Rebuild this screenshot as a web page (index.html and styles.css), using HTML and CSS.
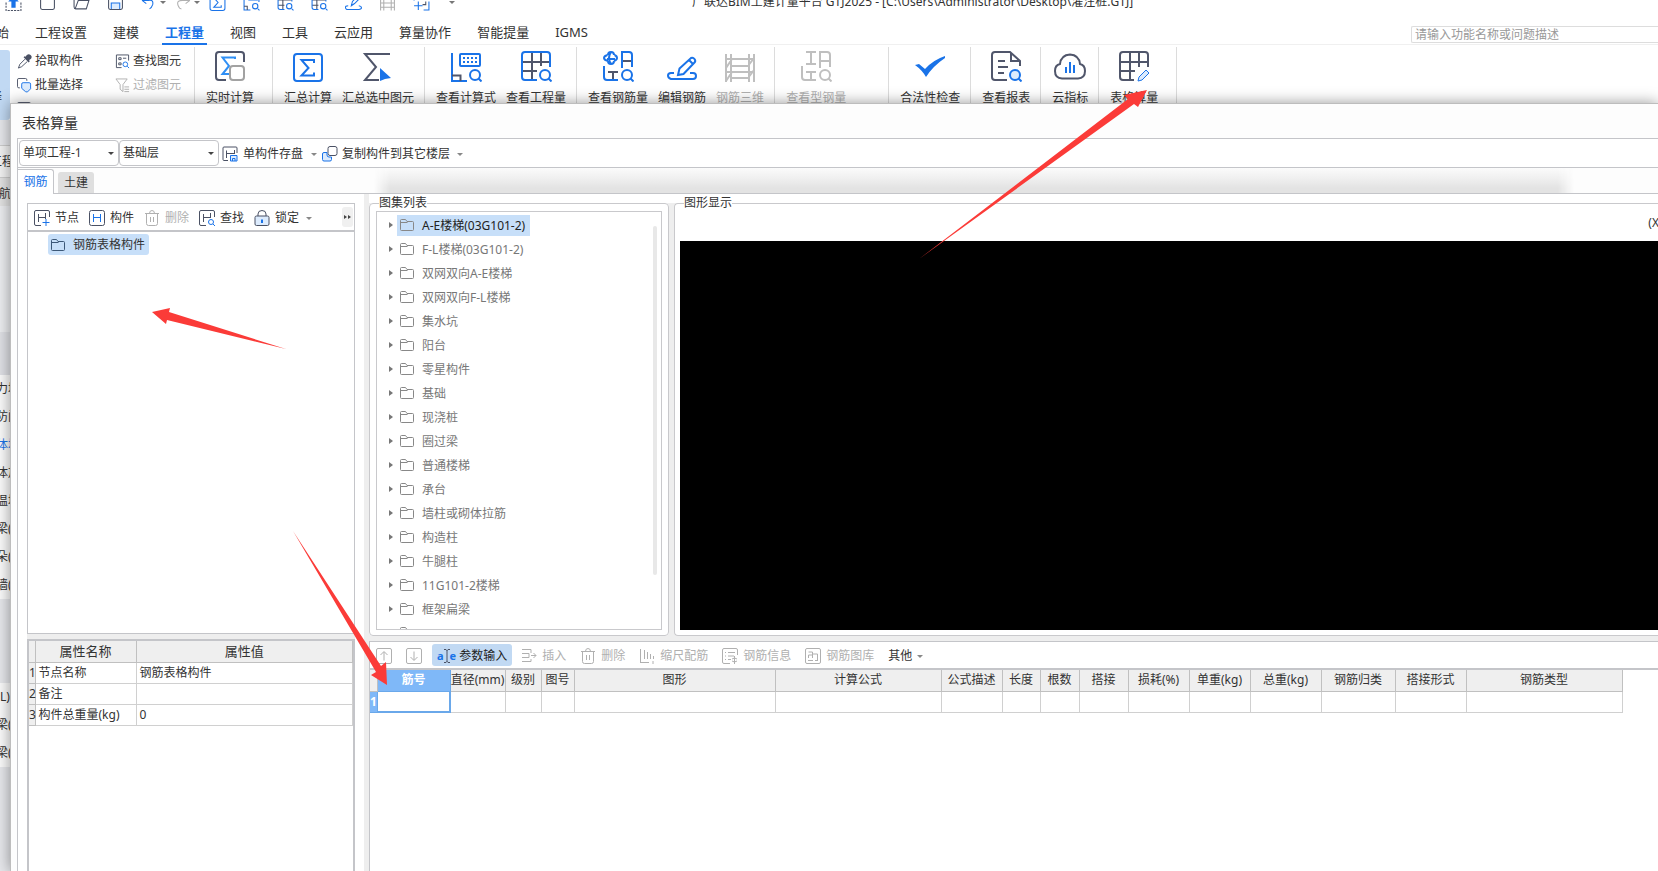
FILE: index.html
```html
<!DOCTYPE html>
<html lang="zh-CN">
<head>
<meta charset="utf-8">
<title>广联达BIM土建计量平台 GTJ2025</title>
<link rel="stylesheet" href="styles.css">
</head>
<body>
<svg class="defs" aria-hidden="true">
  <symbol id="folder" viewBox="0 0 14 12"><path d="M.5 10.5v-9q0-1 1-1h4l1.500 2h5.500q1 0 1 1v7q0 1-1 1h-11q-1 0-1-1zM.5 3.500h7"/></symbol>
  <symbol id="trash" viewBox="0 0 14 16"><path d="M0 3.500h14M4.500 3.500q0-3 2.500-3t2.500 3M1.500 3.500v10q0 2 2 2h7q2 0 2-2v-10M5.500 7v5M8.500 7v5"/></symbol>
  <symbol id="sigma" viewBox="0 0 16 16"><path d="M1 2.500q0-2 2-2h10q2 0 2 2v11q0 2-2 2H3q-2 0-2-2zM11.500 5.500v-2h-7l4 4.500-4 4.500h7v-2"/></symbol>
  <symbol id="gridfind" viewBox="0 0 16 16"><path class="s-dark" d="M5.500 1v13M1 5.500h13M1 10.500h6"/><path d="M7 14.500H3q-2 0-2-2V2h13v5M14 14l1.500 1.500"/><circle cx="11.500" cy="11.500" r="2.500"/></symbol>
</svg>

<div class="app">
  <header class="titlebar">
    <div class="quick">
      <button aria-label="同步"><svg viewBox="0 0 16 16"><path class="s-dark" stroke-dasharray="2 1" d="M1 8v7.500h14V8"/><path class="f-blue" d="M8 2l5 5h-3v6H6V7H3z"/></svg></button>
      <button aria-label="新建"><svg viewBox="0 0 16 16"><path class="s-dark" d="M1.500 1v12q0 1.500 1.500 1.500h10q1.500 0 1.500-1.500V1"/></svg></button>
      <button aria-label="打开"><svg viewBox="0 0 16 16"><path class="s-dark" d="M1 4v8q0 2 1.500 2h10l2.500-8H5l-3 8M14 6V3"/></svg></button>
      <button aria-label="保存"><svg viewBox="0 0 16 16"><path class="s-dark" d="M1.500 1v12q0 1.500 1.500 1.500h10q1.500 0 1.500-1.500V1"/><path class="s-blue p-light" d="M4 14V8.500h8V14"/></svg></button>
      <button aria-label="撤销" class="with-caret"><svg viewBox="0 0 16 16"><path class="s-blue" d="M1 6l4-4M1 6l4 3M1 6h6q5-1 4 4-1 3-3 4"/></svg><i class="caret"></i></button>
      <button aria-label="重做" class="with-caret off"><svg viewBox="0 0 16 16"><path d="M14 6l-4-4M14 6l-4 3M14 6H7Q1 6 3 11q1 3 3 3"/></svg><i class="caret"></i></button>
      <button aria-label="汇总计算"><svg class="s-blue"><use href="#sigma"/></svg></button>
      <button aria-label="查看计算式"><svg viewBox="0 0 16 16"><path class="s-blue" d="M1 1v14h6M4 2.500h11v5M5 5.500h9M14 14l1.500 1.500"/><circle class="s-blue" cx="11.500" cy="11.500" r="2.500"/><path class="s-dark" d="M1 11.500h3V15"/></svg></button>
      <button aria-label="查看工程量"><svg class="s-blue"><use href="#gridfind"/></svg></button>
      <button aria-label="查看钢筋量"><svg class="s-blue"><use href="#gridfind"/></svg></button>
      <button aria-label="编辑钢筋"><svg viewBox="0 0 16 16"><path class="s-blue" d="M6 11l1-4 6-6 2 2-6 6zM3 11q-3 0-2.500 2T3 14.500h10q2.500 0 2.500-1.500T13 11"/></svg></button>
      <button aria-label="钢筋三维" class="off"><svg viewBox="0 0 16 16"><path d="M1.500 0v15.500M4.500 0v15.500M11.500 0v15.500M14.500 0v15.500M1 4.500h14M1 8.500h14M1 12.500h14"/></svg></button>
      <button aria-label="添加"><svg viewBox="0 0 16 16"><path class="s-blue" d="M5 7v8M1 11h8M10 15h5V7M1 6V1"/><path class="s-dark" d="M9 10h3V7"/></svg></button>
      <button aria-label="更多"><i class="caret"></i></button>
    </div>
    <h1>广联达BIM土建计量平台 GTJ2025 - [C:\Users\Administrator\Desktop\灌注桩.GTJ]</h1>
  </header>

  <nav class="menu">
    <a href="#">开始</a><a href="#">工程设置</a><a href="#">建模</a><a href="#" class="active">工程量</a><a href="#">视图</a><a href="#">工具</a><a href="#">云应用</a><a href="#">算量协作</a><a href="#">智能提量</a><a href="#">IGMS</a>
    <input class="search" type="search" aria-label="搜索" placeholder="请输入功能名称或问题描述">
  </nav>

  <div class="ribbon">
    <button class="select-tool">选择</button>
    <div class="small-tools">
      <button><svg viewBox="0 0 16 16"><path class="f-dark" d="M9 3l1.500-2q2-1.500 4 0t.5 4L13 6.500l.5 1.500-1 1L7 3.500l1-1z"/><path class="s-dark" d="M8.500 5.500L3 11l-1.500 4 3.500-1.500L11 8"/></svg>拾取构件</button>
      <button><svg viewBox="0 0 16 16"><path class="s-dark" d="M3 10.500H2q-1.500 0-1.500-1.500V2Q.5.500 2 .5h7q1.500 0 1.500 1.500v1"/><path class="s-blue p-light" d="M9 14.500L5 11V6.500q0-1.500 1.500-1.500H13q1.500 0 1.500 1.500v5L11 15z"/></svg>批量选择</button>
      <button aria-label="更多选择"><svg viewBox="0 0 16 16"><path class="s-dark" d="M.5 15V2Q.5.500 2 .5h11q1.500 0 1.500 1.500v13"/></svg></button>
    </div>
    <div class="small-tools">
      <button><svg viewBox="0 0 16 16"><path class="s-dark" d="M7 14.500H1.500V1h13v6M4 4h2.500v2H4zM4 9.500h2.500v2H4zM8.500 4.500H12"/><circle class="s-blue" cx="11" cy="11" r="2.500"/><path class="s-blue" d="M13 13l2 2"/></svg>查找图元</button>
      <button class="off"><svg viewBox="0 0 16 16"><path d="M1 1h12l-4.500 6v7.500L5.500 12V7zM10 9.500h5M10 12h5M10 14.500h5"/></svg>过滤图元</button>
    </div>

    <div class="group wide">
      <button><svg viewBox="0 0 32 32"><path class="k-dark" d="M12 30H5q-3 0-3-3V5q0-3 3-3h22q3 0 3 3v7"/><path class="k-sky" d="M21 9V7.500H8.500L15 16l-6.500 8H15"/><rect class="k-gray" x="16" y="16" width="14" height="14" rx="3"/></svg>实时计算</button>
    </div>
    <div class="group">
      <button><svg viewBox="0 0 32 32"><rect class="k-blue" x="2" y="4" width="28" height="27" rx="3"/><path class="k-blue" d="M22 13v-3H9.500l7 8-7 7.500H22v-3"/></svg>汇总计算</button>
      <button><svg viewBox="0 0 32 32"><path class="k-dark" d="M28 4H3l11 13L3 30h14"/><path class="f-blue" d="M18 18l11 10-6 1-5 2z"/></svg>汇总选中图元</button>
    </div>
    <div class="group">
      <button><svg viewBox="0 0 32 32"><path class="k-blue" d="M2 3v28h15"/><path class="k-dark" d="M2 25.500h8.500V31"/><rect class="k-blue" x="10" y="4" width="20" height="12" rx="1"/><path class="k-dots" d="M13 8h14M13 12h14"/><circle class="k-blue" cx="25" cy="25" r="5"/><path class="k-blue" d="M28.500 28.500l3 3"/></svg>查看计算式</button>
      <button><svg viewBox="0 0 32 32"><path class="k-dark" d="M12 3v27M21 3v13M3 12h27M3 21h14"/><path class="k-blue" d="M17 30H5q-3 0-3-3V5q0-3 3-3h22q3 0 3 3v12M28.500 28.500l3 3"/><circle class="k-blue" cx="25" cy="25" r="5"/></svg>查看工程量</button>
    </div>
    <div class="group">
      <button><svg viewBox="0 0 32 32"><path class="k-dark" d="M20 11h10M20 2v16M6 22h10M11 22v8"/><path class="k-blue" d="M20 18V2h7q3 0 3 3v12M2 16v11q0 3 3 3h11M28.500 28.500l3 3M6 5q0-3 3-3t3 3M6 11q0 3 3 3t3-3M5.500 5Q2 6 2 8t4 3M12.500 5Q15 6 15 8t-3 3M9 2q-4 6 0 12M5 9h8"/><circle class="k-blue" cx="25" cy="25" r="5"/></svg>查看钢筋量</button>
      <button><svg viewBox="0 0 32 32"><path class="k-blue" d="M12 25l1.500-6.500L25 8q2-1 3.500 1t0 3.500L17.500 24zM23 10l4 4M8 23H5q-3 0-3 2.500T5 29h22q3 0 3-3t-3-3h-3"/></svg>编辑钢筋</button>
      <button class="off"><svg viewBox="0 0 32 32"><path class="k-off" d="M2 4v28M7 4v28M25 4v28M30 4v28M3 9h27M7 16h18M3 22h27M7 28h18M2 18l6-9M2 31l6-9M24 16l6-8M24 28l6-8"/></svg>钢筋三维</button>
    </div>
    <div class="group extra">
      <button class="off"><svg viewBox="0 0 32 32"><path class="k-off" d="M6 2h10M11 2v12M6 14h10M20 18V2h7q3 0 3 3v12M20 11h10M2 16v11q0 3 3 3h11M6 22h10M11 22v8M28.500 28.500l3 3"/><circle class="k-off" cx="25" cy="25" r="5"/></svg>查看型钢量</button>
    </div>
    <div class="group">
      <button><svg viewBox="0 0 32 32"><path class="f-blue" d="M1 15l4-1 6 5q8-9 20-13v2q-12 8-19 19-4-7-11-12z"/></svg>合法性检查</button>
    </div>
    <div class="group">
      <button><svg viewBox="0 0 32 32"><path class="k-dark" d="M17 30H5q-3 0-3-3V5q0-3 3-3h15l10 9v5M21 3v8h9M8 11h7M8 17h10M8 23h6"/><circle class="k-blue p-light" cx="25" cy="25" r="5"/><path class="k-blue" d="M28.500 28.500l3 3"/></svg>查看报表</button>
    </div>
    <div class="group">
      <button><svg viewBox="0 0 32 32"><path class="k-dark" d="M8 28.500Q1 28 1 21q0-6 5-7 1-9 10-9.500Q25 5 26 14q5 1 5 7 0 7-7 7.500z"/><path class="k-blue" d="M12 17v6M16 12v11M20 15v8"/></svg>云指标</button>
    </div>
    <div class="group wide last">
      <button><svg viewBox="0 0 32 32"><path class="k-dark" d="M16 30H5q-3 0-3-3V5q0-3 3-3h22q3 0 3 3v12M12 3v27M21 3v14M3 12h27M3 21h14"/><path class="s-blue p-light" d="M20 31l1-4 7-7 3 3-7 7z"/></svg>表格算量</button>
    </div>
  </div>

  <aside class="side">
    <div class="side-head">工程</div>
    <div class="side-head nav">导航</div>
    <div class="side-fill"></div>
    <div class="side-dark"></div>
    <ul>
      <li>力墙</li><li>防门</li><li class="on">体墙</li><li>体加</li><li>温墙</li><li>梁(G)</li><li>朵(A)</li><li>墙(Q)</li>
    </ul>
    <div class="side-gap"></div>
    <ul>
      <li class="end">L)</li><li>梁(L)</li><li>梁(K)</li>
    </ul>
  </aside>
</div>

<main class="dialog">
  <h2>表格算量</h2>
  <div class="frame">
    <div class="bar dialog-bar">
      <label class="pick"><select aria-label="单项工程"><option>单项工程-1</option></select></label>
      <label class="pick"><select aria-label="楼层"><option>基础层</option></select></label>
      <button><svg viewBox="0 0 16 16"><path class="s-dark" d="M6 14.500H2q-1 0-1-1V2q0-1 1-1h12q1 0 1 1v5M4.500 12V4.500M4.500 7.500h8M12.500 4v4"/><path class="s-blue p-light" d="M8.500 9.500h6.500v5.500H8.500zM10.500 15v-2.500H13V15"/></svg>单构件存盘<i class="caret"></i></button>
      <button><svg viewBox="0 0 16 16"><rect class="s-dark" x="6" y=".5" width="9" height="9" rx="2"/><path class="s-blue p-light" d="M5 6.500H2q-1.500 0-1.500 1.500v5.500Q.5 15 2 15h6q1.500 0 1.500-1.500V11H7q-2 0-2-2z"/></svg>复制构件到其它楼层<i class="caret"></i></button>
    </div>
    <div class="tabs">
      <button class="tab active">钢筋</button><button class="tab">土建</button>
      <div class="haze"></div>
    </div>

    <div class="body">
      <section class="left">
        <div class="tree-box">
          <div class="bar tree-bar">
            <button><svg viewBox="0 0 16 16"><path class="s-dark" d="M7 15.500H2q-1.500 0-1.500-1.500V2Q.5.500 2 .5h12q1.500 0 1.500 1.500v5M4.500 12V4M4.500 7.500h7M11.500 3v6"/><path class="s-blue" d="M12 9v7M8.500 12.500h7"/></svg>节点</button>
            <button><svg viewBox="0 0 16 16"><rect class="s-dark" x=".5" y=".5" width="15" height="15" rx="2"/><path class="s-blue" d="M4.500 4v8M11.500 4v8M4.500 7.500h7"/></svg>构件</button>
            <button class="off"><svg><use href="#trash"/></svg>删除</button>
            <button><svg viewBox="0 0 16 16"><path class="s-dark" d="M7 15.500H2q-1.500 0-1.500-1.500V2Q.5.500 2 .5h12q1.500 0 1.500 1.500v5M4.500 12V4M4.500 7.500h7M11.500 3v5"/><circle class="s-blue" cx="12" cy="12" r="2.500"/><path class="s-blue" d="M14 14l2 2"/></svg>查找</button>
            <button><svg viewBox="0 0 16 16"><path class="s-dark" d="M4 6V4q0-3.500 4-3.500T12 4v2"/><rect class="s-dark p-light" x="1" y="6" width="14" height="9.500" rx="1.500"/><path class="s-blue k2" d="M8 10v3M7 10.500h2"/></svg>锁定<i class="caret"></i></button>
            <button class="more" aria-label="更多"><i></i><i></i></button>
          </div>
          <div class="tree"><a href="#"><svg><use href="#folder"/></svg>钢筋表格构件</a></div>
        </div>
        <div class="props">
          <table>
            <colgroup><col class="p0"><col class="p1"><col class="p2"></colgroup>
            <thead><tr><th></th><th>属性名称</th><th>属性值</th></tr></thead>
            <tbody>
              <tr><th>1</th><td>节点名称</td><td>钢筋表格构件</td></tr>
              <tr><th>2</th><td>备注</td><td></td></tr>
              <tr><th>3</th><td>构件总重量(kg)</td><td>0</td></tr>
            </tbody>
          </table>
        </div>
      </section>

      <section class="right">
        <div class="upper">
          <fieldset>
            <legend>图集列表</legend>
            <ul class="atlas">
              <li class="on"><svg><use href="#folder"/></svg><span>A-E楼梯(03G101-2)</span></li>
              <li><svg><use href="#folder"/></svg><span>F-L楼梯(03G101-2)</span></li>
              <li><svg><use href="#folder"/></svg><span>双网双向A-E楼梯</span></li>
              <li><svg><use href="#folder"/></svg><span>双网双向F-L楼梯</span></li>
              <li><svg><use href="#folder"/></svg><span>集水坑</span></li>
              <li><svg><use href="#folder"/></svg><span>阳台</span></li>
              <li><svg><use href="#folder"/></svg><span>零星构件</span></li>
              <li><svg><use href="#folder"/></svg><span>基础</span></li>
              <li><svg><use href="#folder"/></svg><span>现浇桩</span></li>
              <li><svg><use href="#folder"/></svg><span>圈过梁</span></li>
              <li><svg><use href="#folder"/></svg><span>普通楼梯</span></li>
              <li><svg><use href="#folder"/></svg><span>承台</span></li>
              <li><svg><use href="#folder"/></svg><span>墙柱或砌体拉筋</span></li>
              <li><svg><use href="#folder"/></svg><span>构造柱</span></li>
              <li><svg><use href="#folder"/></svg><span>牛腿柱</span></li>
              <li><svg><use href="#folder"/></svg><span>11G101-2楼梯</span></li>
              <li><svg><use href="#folder"/></svg><span>框架扁梁</span></li>
              <li><svg><use href="#folder"/></svg></li>
            </ul>
          </fieldset>
          <fieldset class="graph">
            <legend>图形显示</legend>
            <div class="graph-box"><p>(X</p><div class="canvas"></div></div>
          </fieldset>
        </div>

        <div class="lower">
          <div class="bar lower-bar">
            <button class="off" aria-label="上移"><svg viewBox="0 0 16 16"><rect x=".5" y=".5" width="15" height="15" rx="1.500"/><path d="M8 12.500V4M4.500 7L8 3.500 11.500 7"/></svg></button>
            <button class="off" aria-label="下移"><svg viewBox="0 0 16 16"><rect x=".5" y=".5" width="15" height="15" rx="1.500"/><path d="M8 3.500V12M4.500 9L8 12.500 11.500 9"/></svg></button>
            <button class="pressed"><b class="ae">a<svg viewBox="0 0 6 14"><path class="s-dark" d="M0 .5h2l1 1 1-1h2M3 1v12M0 13.500h2l1-1 1 1h2"/></svg>e</b>参数输入</button>
            <button class="off"><svg viewBox="0 0 16 16"><path d="M10 5V1.500H1M1 5.500h7v4H1M1 13.500h9V11M10 7.500h5M12.500 5L15 7.500 12.500 10"/></svg>插入</button>
            <button class="off"><svg><use href="#trash"/></svg>删除</button>
            <button class="off"><svg viewBox="0 0 16 16"><path d="M1.500 1v13.500M5.500 2v9M8.500 4v7M11.500 6v5M14.500 8v3M1 14.500h9M14 13v3"/></svg>缩尺配筋</button>
            <button class="off"><svg viewBox="0 0 16 16"><path d="M8 15.500H2q-1.500 0-1.500-1.500V2Q.5.500 2 .5h12q1.500 0 1.500 1.500v5M3 4.500h1M6 4.500h7M3 8h1M6 8h6M3 11.500h1M6 11.500h3M12.500 8v8M10 11q2.500-2 5 0M10 13q2.500 2 5 0"/></svg>钢筋信息</button>
            <button class="off"><svg viewBox="0 0 16 16"><rect x=".5" y=".5" width="15" height="15" rx="1.500"/><path d="M3.500 4h4v3h-4v3M7.500 10V6h5v6M3 12.500h5M10 12.500h3"/></svg>钢筋图库</button>
            <button>其他<i class="caret"></i></button>
          </div>
          <table class="rebar">
            <colgroup><col class="w7"><col class="w73"><col class="w55"><col class="w36"><col class="w33"><col class="w201"><col class="w166"><col class="w61"><col class="w38"><col class="w39"><col class="w49"><col class="w61"><col class="w61"><col class="w71"><col class="w74"><col class="w71"><col class="w156"></colgroup>
            <thead><tr><th></th><th class="on">筋号</th><th>直径(mm)</th><th>级别</th><th>图号</th><th>图形</th><th>计算公式</th><th>公式描述</th><th>长度</th><th>根数</th><th>搭接</th><th>损耗(%)</th><th>单重(kg)</th><th>总重(kg)</th><th>钢筋归类</th><th>搭接形式</th><th>钢筋类型</th></tr></thead>
            <tbody><tr><th class="on">1</th><td class="edit"></td><td></td><td></td><td></td><td></td><td></td><td></td><td></td><td></td><td></td><td></td><td></td><td></td><td></td><td></td><td></td></tr></tbody>
          </table>
        </div>
      </section>
    </div>
  </div>
</main>

<svg class="marks" width="1658" height="871" viewBox="0 0 1658 871" aria-hidden="true">
  <path d="M919 259L1128 99l-4-4 23-5-9 17-4-3z"/>
  <path d="M152 312l18-4-1 4 117 37-119-29-1 4z"/>
  <path d="M293 531l88 135 5-4 1 23-16-10 5-3z"/>
</svg>
</body>
</html>
```
FILE: styles.css
```css
* { box-sizing: border-box; }

html, body { height: 100%; margin: 0; }

body {
  position: relative;
  overflow: hidden;
  background: #fff;
  color: #333;
  font: 12px/16px "Noto Sans", "Noto Sans CJK SC", sans-serif;
}

button, select, input {
  margin: 0;
  padding: 0;
  border: 0;
  background: none;
  color: inherit;
  font: inherit;
}

button { white-space: nowrap; }
a { color: inherit; text-decoration: none; }
ul { margin: 0; padding: 0; list-style: none; }
h1, h2, p { margin: 0; font-weight: normal; }
table { border-collapse: collapse; table-layout: fixed; }
th { font-weight: normal; }

svg { flex: none; fill: none; stroke: currentColor; }
.defs { position: absolute; width: 0; height: 0; }

.s-dark { stroke: #4a5164; }
.s-blue { stroke: #1a73e8; }
.k-dark { stroke: #50566b; stroke-width: 2; }
.k-blue { stroke: #1a73e8; stroke-width: 2; }
.k-sky { stroke: #2f8ff5; stroke-width: 2; }
.k-gray { stroke: #a2a2a2; stroke-width: 2; fill: #fff; }
.k-off { stroke: #bfbfbf; stroke-width: 2; }
.k-dots { stroke: #1a73e8; stroke-width: 2; stroke-dasharray: 2 2; }
.k2 { stroke-width: 2; }
.f-blue { fill: #1a73e8; stroke: none; }
.f-dark { fill: #4a5164; stroke: none; }
.p-light { fill: #dcebfd; }
.off { color: #b0b0b0; }

.caret {
  display: inline-block;
  flex: none;
  border: 3px solid transparent;
  border-top-color: #777;
  border-bottom: 0;
}

/* application window */
.app { display: flex; flex-direction: column; height: 100%; }

.titlebar {
  display: flex;
  align-items: center;
  flex: none;
  height: 24px;
  margin-top: -10px;
}
.quick { display: flex; width: 692px; padding-left: 5px; }
.quick button { display: flex; align-items: center; width: 34px; height: 16px; }
.quick svg { width: 17px; height: 17px; }
.quick .caret { margin-left: 2px; }
.titlebar h1 { font-size: 12px; line-height: 16px; white-space: nowrap; }

.menu {
  display: flex;
  flex: none;
  height: 31px;
  border-bottom: 1px solid #f0f0f0;
  font-size: 13px;
}
.menu a {
  position: relative;
  flex: none;
  padding: 7px 13px 0;
  line-height: 22px;
}
.menu a:first-child { margin-left: -30px; }
.menu .active { color: #1a73e8; font-weight: bold; }
.menu .active::after {
  content: "";
  position: absolute;
  right: 10px;
  bottom: -1px;
  left: 10px;
  height: 2px;
  background: #1a73e8;
}
.search {
  width: 247px;
  height: 17px;
  margin: 12px 0 0 auto;
  padding-left: 3px;
  border: 1px solid #ddd;
  border-right: 0;
  border-radius: 2px 0 0 2px;
  font-size: 12px;
}
.search::placeholder { color: #999; }

.ribbon { display: flex; flex: none; height: 75px; }
.select-tool {
  display: flex;
  align-items: flex-end;
  justify-content: flex-end;
  width: 10px;
  margin-top: 5px;
  padding: 0 8px 15px 0;
  border-radius: 0 3px 3px 0;
  background: #c1d9f3;
}
.small-tools { width: 98px; padding: 4px 0 0 7px; }
.small-tools + .small-tools { width: 86px; }
.small-tools button { display: flex; align-items: center; gap: 3px; height: 24px; }
.small-tools svg { width: 15px; height: 15px; }

.group {
  display: flex;
  gap: 10px;
  height: 60px;
  margin-top: 2px;
  padding: 0 10px 0 11px;
  border-left: 1px solid #dcdcdc;
}
.group.wide { padding-right: 18px; }
.group.extra { padding-right: 42px; }
.group.last { border-right: 1px solid #dcdcdc; }
.group button { display: flex; flex-direction: column; align-items: center; padding-top: 3px; gap: 8px; }
.group svg { width: 32px; height: 32px; }

/* navigation strip under the dialog's left edge */
.side { flex: 1; width: 24px; overflow: hidden; background: #e6e7eb; white-space: nowrap; }
.side-head { height: 32px; padding-top: 8px; margin-top: 25px; border-top: 1px solid #ccc; background: #f2f2f2; text-indent: -10px; }
.side-head.nav { height: 29px; margin-top: 0; background: #e2e2e2; text-indent: -13px; }
.side-fill { height: 126px; background: #ecedf0; }
.side-dark { height: 43px; background: #dfe0e5; }
.side ul { background: #fafafa; }
.side li { height: 28px; line-height: 28px; text-indent: -4px; }
.side .end { text-indent: 0; }
.side .on { color: #1a73e8; }
.side-gap { height: 84px; }

/* dialog */
.dialog {
  position: absolute;
  top: 103px;
  right: 0;
  bottom: 0;
  left: 10px;
  display: flex;
  flex-direction: column;
  border: 1px solid #bdbdbd;
  border-right: 0;
  border-bottom: 0;
  background: #fdfdfd;
  box-shadow: 0 0 14px rgba(0, 0, 0, 0.4);
}
.dialog h2 {
  flex: none;
  height: 34px;
  padding-left: 11px;
  font-size: 14px;
  line-height: 38px;
}
.frame {
  display: flex;
  flex: 1;
  flex-direction: column;
  min-height: 0;
  margin-left: 6px;
  border-left: 1px solid #c4c5c9;
}

.bar { display: flex; align-items: center; flex: none; background: #fff; }
.bar button { display: flex; align-items: center; gap: 5px; }
.bar svg { width: 16px; height: 16px; }

.dialog-bar { height: 30px; border: solid #c4c5c9; border-width: 1px 0; }
.dialog-bar button { margin-left: 3px; padding-top: 2px; }
.dialog-bar button + button { margin-left: 5px; gap: 4px; }
.dialog-bar .caret { margin-left: 3px; border-top-color: #888; }
.pick { position: relative; margin-left: 1px; }
.pick + .pick { margin-left: 0; }
.pick select {
  width: 100px;
  height: 26px;
  padding: 0 3px;
  border: 1px solid #c4c5c9;
  border-radius: 4px;
  appearance: none;
}
.pick::after {
  content: "";
  position: absolute;
  top: 12px;
  right: 5px;
  border: 3px solid transparent;
  border-top-color: #444;
  border-bottom: 0;
}

.tabs { display: flex; align-items: flex-end; flex: none; height: 26px; border-bottom: 1px solid #c4c5c9; }
.tab { width: 36px; height: 21px; margin-left: 4px; border-radius: 3px 3px 0 0; background: #dfdfdf; }
.tab.active {
  height: 25px;
  margin: 0 0 -1px;
  border: solid #c4c5c9;
  border-width: 1px 1px 0 0;
  border-radius: 0 3px 0 0;
  background: #fff;
  color: #1a73e8;
}
.haze {
  flex: 1;
  align-self: stretch;
  margin: 0 84px 0 280px;
  background: linear-gradient(#fbfbfb, #f0f0f0 40%, #e3e3e3 80%);
  mask-image: linear-gradient(90deg, transparent, #000 16px calc(100% - 16px), transparent);
}

.body { display: grid; flex: 1; grid-template-columns: 346px 1fr; gap: 5px; min-height: 0; background: #eee; }

.left {
  display: grid;
  grid-template-rows: 431fr 237fr;
  min-height: 0;
  padding: 9px 9px 0;
  background: #fff;
}
.tree-box { display: flex; flex-direction: column; border: 1px solid #c4c5c9; }
.tree-bar { gap: 10px; height: 28px; padding-left: 6px; border-bottom: 2px solid #c4c5c9; }
.tree-bar button { padding-top: 2px; }
.tree-bar .caret { margin-left: 2px; border-top-color: #888; }
.tree-bar .more { justify-content: center; gap: 1px; width: 11px; height: 20px; margin: 0 1px 0 auto; padding: 0; border-radius: 3px; background: #f0f0f0; }
.more i { border: 2px solid transparent; border-left: 3px solid #444; border-right: 0; }
.tree { padding: 2px 20px; }
.tree a { display: inline-flex; align-items: center; gap: 8px; height: 21px; padding: 0 4px 0 3px; border-radius: 3px; background: #c7dff9; }
.tree svg { width: 14px; height: 12px; color: #3c5878; }

.props {
  margin-top: 5px;
  border: 2px solid #c4c5c9;
  border-bottom: 0;
  box-shadow: 0 -5px #eee;
}
.props table { width: 100%; }
.props th, .props td { height: 21px; padding: 0 3px; border: solid #d0d0d0; border-width: 0 1px 1px 0; text-align: left; white-space: nowrap; }
.props th { padding: 0; background: #efefef; border-color: #c0c0c0; text-align: center; }
.props thead th { font-size: 13px; }
.p0 { width: 6px; }
.p1 { width: 101px; }

.right { display: grid; grid-template-rows: 442fr 230fr; gap: 5px; min-width: 0; min-height: 0; }
.upper { display: grid; grid-template-columns: 300px 1fr; gap: 5px; min-height: 0; padding-top: 1px; background: linear-gradient(#fff, #fff) no-repeat 0 0 / 100% 9px; }
fieldset {
  display: grid;
  min-width: 0;
  min-height: 0;
  margin: 0;
  padding: 0 6px 5px;
  border: 1px solid #c9c9cc;
  border-radius: 4px;
  background: #fff;
}
legend { margin-left: 3px; padding: 0; background: #fff; line-height: 16px; }
.atlas {
  position: relative;
  min-height: 0;
  overflow: hidden;
  padding: 1px 0 0 12px;
  border: 1px solid #c9c9cc;
  color: #777;
}
.atlas::after {
  content: "";
  position: absolute;
  top: 14px;
  right: 4px;
  bottom: 54px;
  width: 4px;
  border-radius: 2px;
  background: #e8e8e8;
}
.atlas li { display: flex; align-items: center; height: 24px; }
.atlas li::before { content: ""; border: 3px solid transparent; border-left: 4px solid #777; border-right: 0; margin-right: 4px; }
.atlas svg { box-sizing: content-box; width: 14px; height: 12px; padding: 4px 3px 5px; color: #888; }
.atlas span { height: 21px; padding: 0 5px; line-height: 21px; }
.atlas .on svg, .atlas .on span { background: #c7dff9; }
.atlas .on span { color: #222; }

.graph { padding-right: 0; padding-left: 5px; border-right: 0; border-radius: 4px 0 0 4px; }
.graph legend { margin-left: 4px; }
.graph-box { display: flex; flex-direction: column; }
.graph p { height: 30px; padding-top: 4px; margin-right: -1px; text-align: right; }
.canvas { flex: 1; background: #000; }

.lower { min-width: 0; border: solid #c4c5c9; border-width: 1px 0 0 1px; background: #fff; }
.lower-bar { height: 28px; padding-left: 6px; border-bottom: 2px solid #c4c5c9; gap: 14px; }
.lower-bar button { height: 22px; padding-top: 2px; }
.lower-bar .pressed { gap: 3px; margin: 0 -5px 0 -4px; padding: 2px 5px 0; border-radius: 3px; background: #c1d9f3; color: #222; }
.ae { display: flex; align-items: center; color: #1a73e8; font-size: 11px; }
.lower-bar .ae svg { width: 6px; height: 14px; }
.lower-bar .caret { border-top-color: #888; }

.rebar { width: 1252px; }
.rebar th, .rebar td { height: 21px; padding: 0; border: solid #d0d0d0; border-width: 0 1px 1px 0; white-space: nowrap; }
.rebar th { border-color: #c0c0c0; background: #efefef; }
.rebar th.on { border-color: #6aa8ea; background: #7fb8f8; color: #fff; font-weight: bold; }
.rebar .edit { border: solid #6aa8ea; border-width: 0 2px 2px 0; }
.w7 { width: 7px; }
.w33 { width: 33px; }
.w36 { width: 36px; }
.w38 { width: 38px; }
.w39 { width: 39px; }
.w49 { width: 49px; }
.w55 { width: 55px; }
.w61 { width: 61px; }
.w71 { width: 71px; }
.w73 { width: 73px; }
.w74 { width: 74px; }
.w156 { width: 156px; }
.w166 { width: 166px; }
.w201 { width: 201px; }

/* annotation arrows drawn above everything */
.marks { position: absolute; top: 0; left: 0; fill: #fb3b38; stroke: none; pointer-events: none; }
```
